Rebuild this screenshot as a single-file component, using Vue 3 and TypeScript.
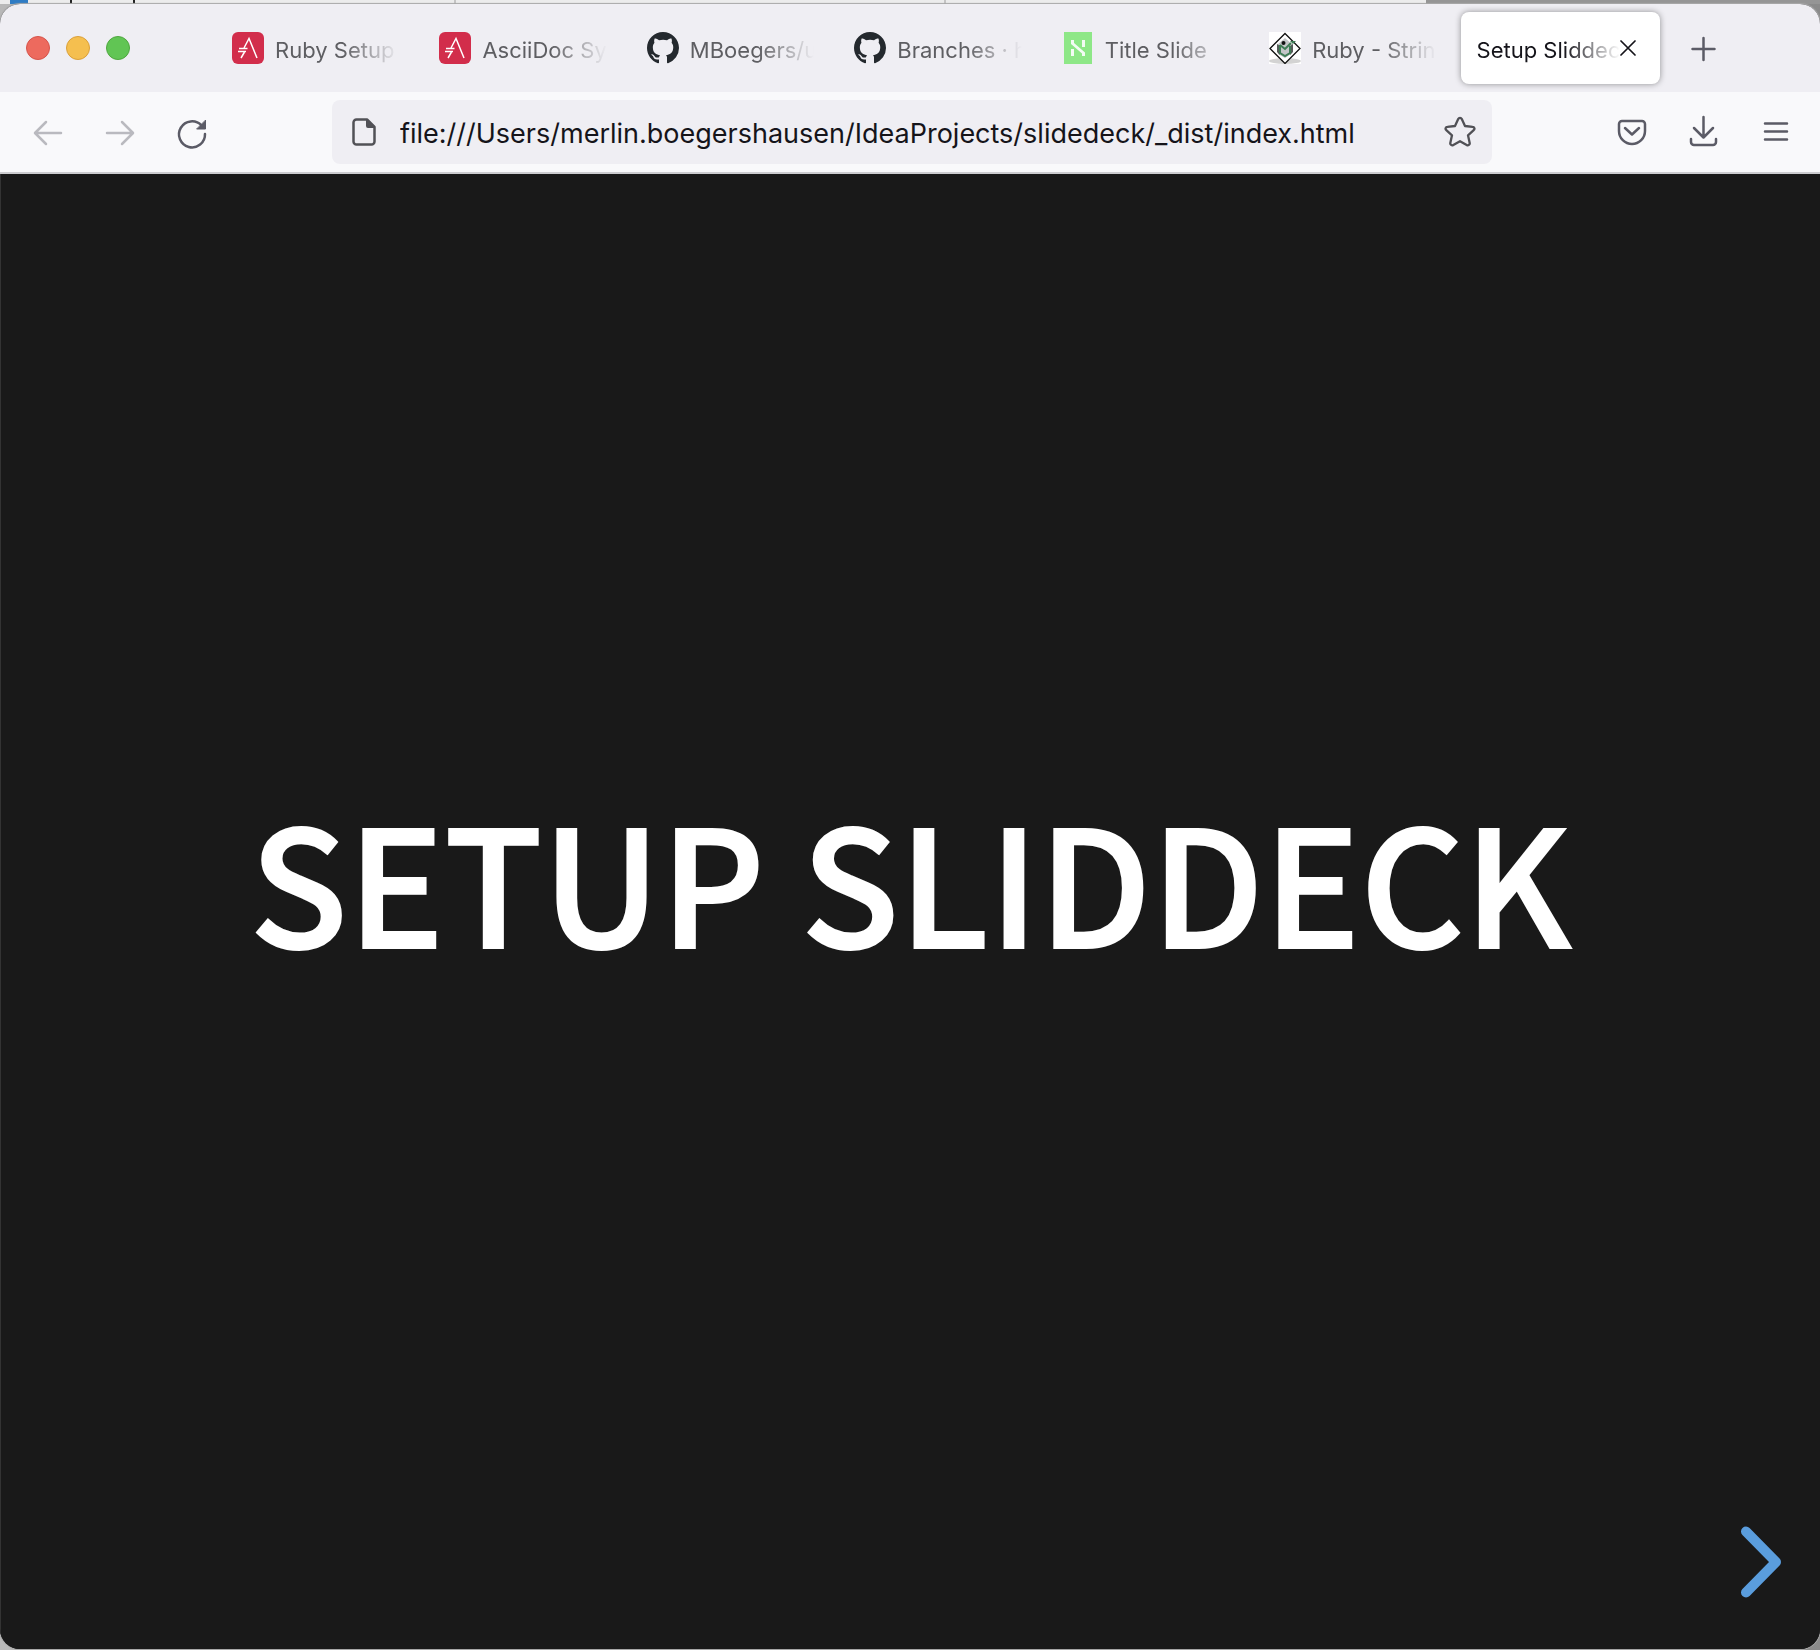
<script setup lang="ts">
import { ref } from 'vue'

type TabIcon = 'asciidoctor' | 'github' | 'hackmd' | 'tutorial'

interface Tab {
  title: string
  icon?: TabIcon
}

const tabs: Tab[] = [
  { title: 'Ruby Setup', icon: 'asciidoctor' },
  { title: 'AsciiDoc Sy', icon: 'asciidoctor' },
  { title: 'MBoegers/u', icon: 'github' },
  { title: 'Branches · h', icon: 'github' },
  { title: 'Title Slide', icon: 'hackmd' },
  { title: 'Ruby - Strin', icon: 'tutorial' },
  { title: 'Setup Sliddeck' },
]

const active = ref(6)
const url = ref('file:///Users/merlin.boegershausen/IdeaProjects/slidedeck/_dist/index.html')
</script>

<template>
  <div class="desktop">
    <div class="behind" aria-hidden="true">
      <svg class="behind-page" height="4" width="1426">
        <rect x="10" y="0" width="18" height="4" fill="#2f7cc4" />
        <rect x="70" y="0" width="2" height="4" fill="#222" />
        <rect x="133" y="0" width="2" height="4" fill="#222" />
        <rect x="454" y="0" width="2" height="4" fill="#c4c4c4" />
        <rect x="944" y="0" width="2" height="4" fill="#c4c4c4" />
      </svg>
    </div>
    <div class="window">
      <header class="tabbar">
        <div class="lights">
          <button class="light red" aria-label="Close window"></button>
          <button class="light yellow" aria-label="Minimize window"></button>
          <button class="light green" aria-label="Zoom window"></button>
        </div>
        <div class="tabs" role="tablist">
          <div
            v-for="(tab, i) in tabs"
            :key="i"
            class="tab"
            :class="{ active: i === active }"
          >
            <button class="tab-main" role="tab" :aria-selected="i === active" @click="active = i">
              <svg v-if="tab.icon === 'asciidoctor'" class="favicon" viewBox="0 0 32 32">
                <rect width="32" height="32" rx="6" fill="#d22d4b" />
                <g fill="none" stroke="#fff" stroke-width="1.5">
                  <path d="M12 16 17 6.5 25 26M12.500 20 9 26" />
                  <path d="M7 16.500h8.500M6 19.500h8" />
                </g>
              </svg>
              <svg v-else-if="tab.icon === 'github'" class="favicon" viewBox="0 0 16 16">
                <path
                  fill="#24292e"
                  d="M8 0C3.58 0 0 3.58 0 8c0 3.54 2.29 6.53 5.47 7.59.4.07.55-.17.55-.38 0-.19-.01-.82-.01-1.49-2.01.37-2.53-.49-2.69-.94-.09-.23-.48-.94-.82-1.13-.28-.15-.68-.52-.01-.53.63-.01 1.08.58 1.23.82.72 1.21 1.87.87 2.33.66.07-.52.28-.87.51-1.07-1.78-.2-3.64-.89-3.64-3.95 0-.87.31-1.59.82-2.15-.08-.2-.36-1.02.08-2.12 0 0 .67-.21 2.2.82.64-.18 1.32-.27 2-.27s1.36.09 2 .27c1.53-1.04 2.2-.82 2.2-.82.44 1.1.16 1.92.08 2.12.51.56.82 1.27.82 2.15 0 3.07-1.87 3.75-3.65 3.95.29.25.54.73.54 1.48 0 1.07-.01 1.93-.01 2.2 0 .21.15.46.55.38A8.01 8.01 0 0 0 16 8c0-4.42-3.58-8-8-8z"
                />
              </svg>
              <svg v-else-if="tab.icon === 'hackmd'" class="favicon" viewBox="0 0 32 32">
                <rect x="2" width="28" height="32" fill="#8ee787" />
                <path
                  fill="#f4fbf4"
                  d="M9 8h3v3l11 9.500V24h-3v-2.500L9 12zM9 17h3v7H9zM20 8h3v7h-3z"
                />
              </svg>
              <svg v-else-if="tab.icon === 'tutorial'" class="favicon" viewBox="0 0 32 32">
                <rect width="32" height="32" fill="#fff" />
                <ellipse cx="16" cy="29" rx="16" ry="3" fill="#d3d3d3" />
                <path d="M16 1.500 31 16.500 16 31.500 1 16.500z" fill="#fff" stroke="#111" stroke-width="1.3" />
                <path d="M16 6 24 13 22 22 16 26 9 22 8 13z" fill="#c4c6c8" />
                <path d="M8 12 11 14V23L8 20zM24 12 21 14V23L24 20z" fill="#555c59" />
                <path d="M11 13 16 17 22 11M11 13v8l5 3 5-3v-7" fill="none" stroke="#3f7d56" stroke-width="2" />
                <path d="M21 9h6l-3 3z" fill="#3f7d56" />
                <circle cx="14.500" cy="11" r="2" fill="#111" />
              </svg>
              <span class="title">{{ tab.title }}</span>
            </button>
            <button v-if="i === active" class="close" aria-label="Close tab">
              <svg width="16" height="16" viewBox="0 0 16 16">
                <path d="M1 1 15 15M15 1 1 15" fill="none" stroke="#15141a" stroke-width="1.7" stroke-linecap="round" />
              </svg>
            </button>
          </div>
        </div>
        <button class="tool new-tab" aria-label="New tab">
          <svg viewBox="0 0 32 32">
            <path d="M15.500 6v22M4.500 17h22" />
          </svg>
        </button>
      </header>

      <nav class="toolbar">
        <div class="group">
          <button class="tool" disabled aria-label="Back">
            <svg viewBox="0 0 32 32"><path d="M29 17H4M14 6 3 17 14 28" /></svg>
          </button>
          <button class="tool" disabled aria-label="Forward">
            <svg viewBox="0 0 32 32"><path d="M3 17h25M18 6 29 17 18 28" /></svg>
          </button>
          <button class="tool" aria-label="Reload">
            <svg viewBox="0 0 32 32">
              <path d="M25.500 9.500A13 13 0 1 0 29 18" />
              <path d="M29.500 4.500V13h-8.500z" fill="#5b5b66" stroke-width="1" />
            </svg>
          </button>
        </div>
        <div class="urlbar">
          <svg class="page" width="24" height="28" viewBox="0 0 24 28">
            <path
              d="M5 1.500h10L22.500 9v14.500a3 3 0 0 1-3 3H4.500a3 3 0 0 1-3-3V4.500a3 3 0 0 1 3-3z"
              fill="none"
              stroke="#515156"
              stroke-width="2.500"
              stroke-linejoin="round"
            />
            <path d="M14 1.500h1.500L22.500 8.500V10H16a2 2 0 0 1-2-2z" fill="#515156" />
          </svg>
          <input v-model="url" class="url" type="text" aria-label="Address" spellcheck="false" />
          <button class="star" aria-label="Bookmark this page">
            <svg width="32" height="32" viewBox="0 0 32 32">
              <path
                d="M14.200 3a2 2 0 0 1 3.600 0l3.200 7 7.600.8a1.900 1.900 0 0 1 1.100 3.400L24 19.300l1.700 7.600a2 2 0 0 1-3 2.100L16 25.200 9.300 29a2 2 0 0 1-3-2.100L8 19.300l-5.700-5.100a1.900 1.900 0 0 1 1.100-3.400l7.600-.8z"
                fill="none"
                stroke="#515156"
                stroke-width="2.300"
                stroke-linejoin="round"
              />
            </svg>
          </button>
        </div>
        <div class="group">
          <button class="tool" aria-label="Save to Pocket">
            <svg viewBox="0 0 32 32">
              <path d="M6 5h20a3 3 0 0 1 3 3v7a13 13 0 0 1-26 0V8a3 3 0 0 1 3-3z" />
              <path d="M9 12 16 18.500 23 12" stroke-width="2.500" />
            </svg>
          </button>
          <button class="tool" aria-label="Downloads">
            <svg viewBox="0 0 32 32">
              <path d="M15.500 1V21M6 12 15.500 21.500 25 12M3 23v3a3 3 0 0 0 3 3h19a3 3 0 0 0 3-3V23" />
            </svg>
          </button>
          <button class="tool" aria-label="Open menu">
            <svg viewBox="0 0 32 32"><path d="M5 7.500h22M5 15.500h22M5 23.500h22" /></svg>
          </button>
        </div>
      </nav>

      <main class="slide">
        <h1>Setup Sliddeck</h1>
        <button class="next" aria-label="Next slide">
          <svg width="42" height="74" viewBox="0 0 42 74">
            <path
              d="M6 6.500 36 37 6 67.500"
              fill="none"
              stroke="#5a9ddd"
              stroke-width="10"
              stroke-linecap="round"
              stroke-linejoin="round"
            />
          </svg>
        </button>
      </main>
    </div>
  </div>
</template>

<style>
body {
  margin: 0;
}
</style>

<style scoped>
.desktop {
  display: flex;
  flex-direction: column;
  box-sizing: border-box;
  min-height: 100vh;
  padding-bottom: 1px;
  background: linear-gradient(to right, #b8b8b8, #8a8a8a);
  font-family: Inter, "Liberation Sans", sans-serif;
}

button {
  padding: 0;
  border: 0;
  background: none;
  color: inherit;
  font: inherit;
}

.behind {
  height: 4px;
  background: #959595;
  overflow: hidden;
}

.behind-page {
  display: block;
  background: #ececec;
}

.window {
  display: flex;
  flex: 1;
  flex-direction: column;
  border-radius: 20px;
  background: #191919;
  box-shadow: 0 0 1px 1px #a8a8a8;
  overflow: hidden;
}

.tabbar {
  display: flex;
  align-items: center;
  box-sizing: border-box;
  height: 88px;
  padding: 0 84px 0 26px;
  background: #efeef3;
}

.lights {
  display: flex;
  gap: 16px;
  width: 190px;
}

.light {
  box-sizing: border-box;
  width: 24px;
  height: 24px;
  border: 1px solid;
  border-radius: 50%;
}

.red {
  border-color: #d6544b;
  background: #ed6a5e;
}

.yellow {
  border-color: #dba03a;
  background: #f5bf4f;
}

.green {
  border-color: #4fa73f;
  background: #61c554;
}

.tabs {
  display: grid;
  flex: 1;
  grid-auto-flow: column;
  grid-auto-columns: minmax(0, 1fr);
  gap: 8px;
  min-width: 0;
}

.tab {
  display: flex;
  align-items: center;
  box-sizing: border-box;
  height: 72px;
  padding: 0 16px;
  border-radius: 8px;
  color: #5e5e62;
}

.tab.active {
  padding-right: 24px;
  background: #fff;
  box-shadow: 0 0 6px rgba(0, 0, 0, 0.4);
  color: #15141a;
}

.tab-main {
  display: flex;
  flex: 1;
  align-items: center;
  gap: 11px;
  min-width: 0;
  height: 100%;
}

.favicon {
  flex: none;
  width: 32px;
  height: 32px;
}

.title {
  flex: 1;
  font-size: 22px;
  line-height: 32px;
  padding-top: 4px;
  text-align: left;
  white-space: nowrap;
  overflow: hidden;
  mask-image: linear-gradient(to left, transparent, #000 56px);
}

.close {
  display: flex;
}

.new-tab {
  margin-left: 12px;
}

.tool {
  display: flex;
  align-items: center;
  justify-content: center;
  width: 64px;
  height: 64px;
}

.tool svg {
  width: 32px;
  height: 32px;
  fill: none;
  stroke: #5b5b66;
  stroke-width: 2.5;
  stroke-linecap: round;
  stroke-linejoin: round;
  overflow: visible;
}

.tool:disabled {
  opacity: 0.4;
}

.toolbar {
  display: flex;
  align-items: center;
  justify-content: space-between;
  gap: 108px;
  height: 80px;
  padding: 0 12px 0 16px;
  border-bottom: 2px solid #cccccf;
  background: #f9f9fb;
}

.group {
  display: flex;
  gap: 8px;
}

.urlbar {
  display: flex;
  flex: 1;
  align-items: center;
  box-sizing: border-box;
  min-width: 0;
  height: 64px;
  padding: 0 16px 0 20px;
  border-radius: 8px;
  background: #efeef3;
}

.url {
  flex: 1;
  min-width: 0;
  height: 48px;
  margin-left: 24px;
  padding: 2px 0 0;
  border: 0;
  outline: 0;
  background: none;
  color: #15141a;
  font-family: inherit;
  font-size: 27px;
}

.star {
  display: flex;
}

.slide {
  display: flex;
  position: relative;
  flex: 1;
  align-items: center;
  justify-content: center;
  padding-bottom: 68px;
  border-left: 1px solid #333;
  background: #191919;
}

h1 {
  margin: 0;
  color: #fff;
  font-family: "Noto Sans CJK JP", sans-serif;
  font-size: 161px;
  font-weight: 500;
  line-height: 192px;
  text-transform: uppercase;
  -webkit-text-stroke: 2px #fff;
}

.next {
  display: flex;
  position: absolute;
  right: 38px;
  bottom: 50px;
}
</style>
